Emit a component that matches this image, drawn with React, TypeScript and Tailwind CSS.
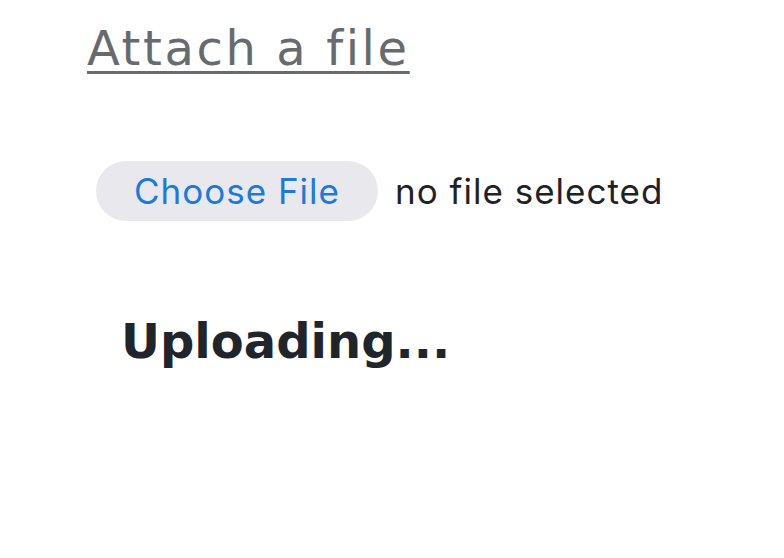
import React from "react";

export default function App() {
  return (
    <div className="w-[784px] h-[558px] bg-white font-['Inter',sans-serif]">
      <div className="pl-[87px] pt-[15px]">
        <a href="#" className="font-['DejaVu_Sans',sans-serif] text-[48px] leading-[66px] text-[#686b6e] underline decoration-[3px] underline-offset-[6px] tracking-[2.6px]">
          Attach a file
        </a>
      </div>
      <div className="flex items-center pl-[96px] mt-[80px] gap-[17px]">
        <button className="h-[60px] w-[282px] rounded-full bg-[#e9e9ed] text-[#1a7ae0] text-[35px] tracking-[1px]">Choose File</button>
        <span className="text-[35px] text-[#1f2124] tracking-[1px]">no file selected</span>
      </div>
      <div className="pl-[121px] mt-[92px]">
        <h2 className="font-['DejaVu_Sans',sans-serif] text-[48px] leading-[56px] font-bold text-[#1f252b]">Uploading...</h2>
      </div>
    </div>
  );
}
